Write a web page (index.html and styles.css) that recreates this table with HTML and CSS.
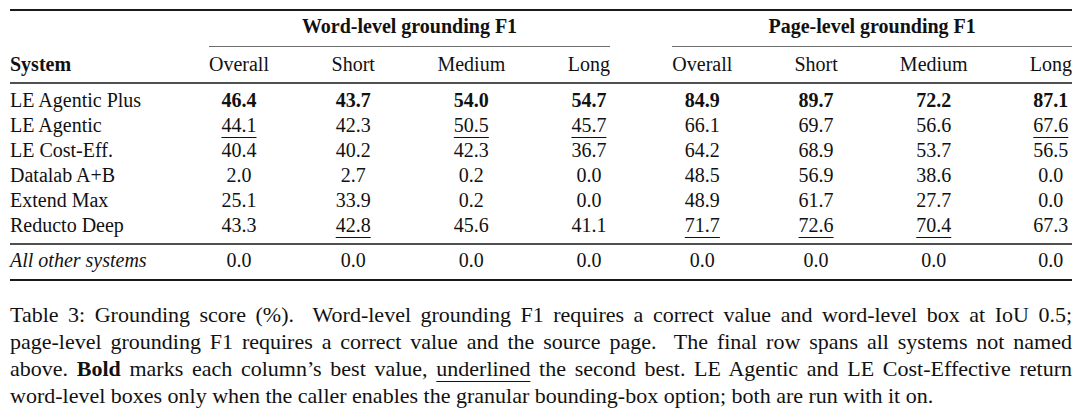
FILE: index.html
```html
<!DOCTYPE html>
<html lang="en">
<head>
<meta charset="utf-8">
<title>Table 3: Grounding score</title>
<link rel="stylesheet" href="styles.css">
</head>
<body>
<div class="page">
  <div class="tbl">
    <div class="rule top"></div>

    <div class="blank"></div>
    <div class="grp g1">Word-level grounding F1</div>
    <div class="grp g2">Page-level grounding F1</div>

    <div class="blank"></div>
    <div class="cmid g1"></div>
    <div class="cmid g2"></div>

    <div class="hd sys b">System</div>
    <div class="hd">Overall</div>
    <div class="hd">Short</div>
    <div class="hd">Medium</div>
    <div class="hd">Long</div>
    <div class="hd">Overall</div>
    <div class="hd">Short</div>
    <div class="hd">Medium</div>
    <div class="hd">Long</div>

    <div class="rule mid first"></div>

    <div class="sys">LE Agentic Plus</div>
    <div class="c b">46.4</div><div class="c b">43.7</div><div class="c b">54.0</div><div class="c b">54.7</div>
    <div class="c b">84.9</div><div class="c b">89.7</div><div class="c b">72.2</div><div class="c b">87.1</div>

    <div class="sys">LE Agentic</div>
    <div class="c"><span class="u">44.1</span></div><div class="c">42.3</div><div class="c"><span class="u">50.5</span></div><div class="c"><span class="u">45.7</span></div>
    <div class="c">66.1</div><div class="c">69.7</div><div class="c">56.6</div><div class="c"><span class="u">67.6</span></div>

    <div class="sys">LE Cost-Eff.</div>
    <div class="c">40.4</div><div class="c">40.2</div><div class="c">42.3</div><div class="c">36.7</div>
    <div class="c">64.2</div><div class="c">68.9</div><div class="c">53.7</div><div class="c">56.5</div>

    <div class="sys">Datalab A+B</div>
    <div class="c">2.0</div><div class="c">2.7</div><div class="c">0.2</div><div class="c">0.0</div>
    <div class="c">48.5</div><div class="c">56.9</div><div class="c">38.6</div><div class="c">0.0</div>

    <div class="sys">Extend Max</div>
    <div class="c">25.1</div><div class="c">33.9</div><div class="c">0.2</div><div class="c">0.0</div>
    <div class="c">48.9</div><div class="c">61.7</div><div class="c">27.7</div><div class="c">0.0</div>

    <div class="sys">Reducto Deep</div>
    <div class="c">43.3</div><div class="c"><span class="u">42.8</span></div><div class="c">45.6</div><div class="c">41.1</div>
    <div class="c"><span class="u">71.7</span></div><div class="c"><span class="u">72.6</span></div><div class="c"><span class="u">70.4</span></div><div class="c">67.3</div>

    <div class="rule mid second"></div>

    <div class="sys i">All other systems</div>
    <div class="c">0.0</div><div class="c">0.0</div><div class="c">0.0</div><div class="c">0.0</div>
    <div class="c">0.0</div><div class="c">0.0</div><div class="c">0.0</div><div class="c">0.0</div>

    <div class="rule bottom"></div>
  </div>

  <p class="caption">
    <span class="line">Table 3: Grounding score (%).&nbsp; Word-level grounding F1 requires a correct value and word-level box at IoU 0.5;</span>
    <span class="line">page-level grounding F1 requires a correct value and the source page.&nbsp; The final row spans all systems not named</span>
    <span class="line">above. <b>Bold</b> marks each column’s best value, <span class="u">underlined</span> the second best. LE Agentic and LE Cost-Effective return</span>
    <span class="line last">word-level boxes only when the caller enables the granular bounding-box option; both are run with it on.</span>
  </p>
</div>
</body>
</html>
```

FILE: styles.css
```css
body {
  margin: 0;
  background: #ffffff;
  color: #111111;
  font-family: "Liberation Serif", "Times New Roman", serif;
}

.page {
  width: 1062px;
  padding: 9px 0 0 10px;
}

.tbl {
  display: grid;
  grid-template-columns: repeat(9, auto);
  justify-content: space-between;
  font-size: 20px;
  line-height: 25px;
}

.rule {
  grid-column: 1 / -1;
}

.top {
  height: 2px;
  background: #1a1a1a;
  margin-bottom: 3px;
}

.grp {
  font-weight: bold;
  text-align: center;
}

.g1 {
  grid-column: 2 / 6;
}

.g2 {
  grid-column: 6 / 10;
}

.cmid {
  height: 1px;
  background: #6e6e6e;
  margin-top: 7px;
  margin-bottom: 5px;
}

.hd,
.c {
  text-align: center;
}

.sys {
  text-align: left;
}

.b {
  font-weight: bold;
}

.i {
  font-style: italic;
}

.u {
  text-decoration: underline;
  text-decoration-thickness: 1px;
  text-underline-offset: 5px;
}

.mid {
  height: 2px;
  background: #505050;
  margin-top: 5px;
}

.mid.first {
  margin-bottom: 4px;
}

.mid.second {
  margin-bottom: 3px;
}

.bottom {
  height: 2px;
  background: #1a1a1a;
  margin-top: 6px;
}

.caption {
  margin: 20px 0 0 0;
  font-size: 22px;
  line-height: 27px;
}

.line {
  display: block;
  text-align: justify;
  text-align-last: justify;
}

.line.last {
  text-align-last: left;
}
```
